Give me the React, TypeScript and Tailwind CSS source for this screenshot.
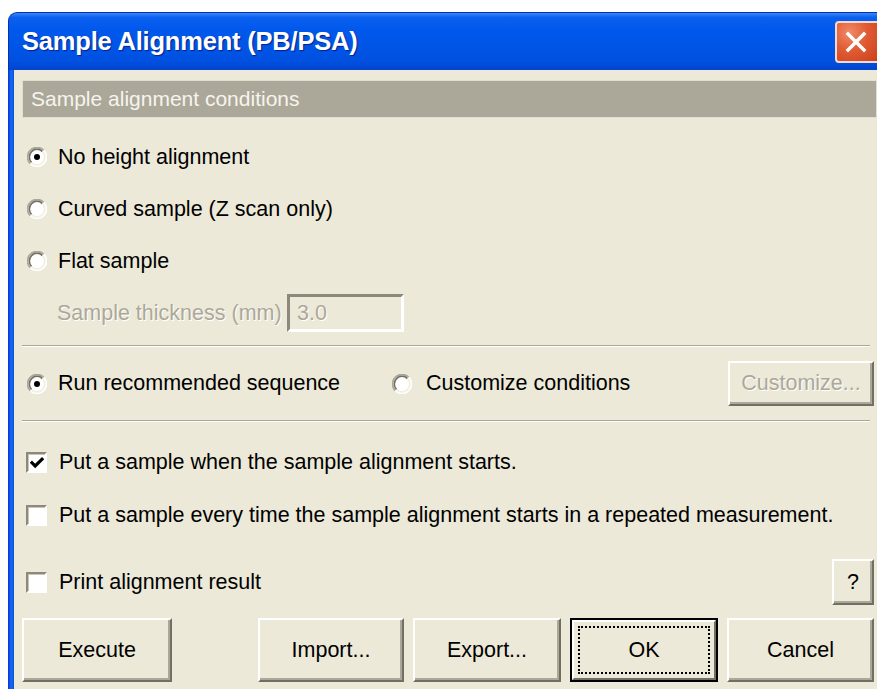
import React from 'react';

const Radio: React.FC<{ checked?: boolean }> = ({ checked }) => (
  <svg width="20" height="20" viewBox="0 0 20 20" className="shrink-0">
    <circle cx="10" cy="10" r="8.5" fill="#ffffff" />
    {/* sunken rim: dark upper-left, light lower-right */}
    <path d="M3.3 16.7 A9.4 9.4 0 0 1 16.7 3.3" stroke="#ACA899" strokeWidth="1.8" fill="none" />
    <path d="M4.6 15.4 A7.6 7.6 0 0 1 15.4 4.6" stroke="#716F64" strokeWidth="1.5" fill="none" />
    <path d="M16.7 3.3 A9.4 9.4 0 0 1 3.3 16.7" stroke="#ffffff" strokeWidth="1.6" fill="none" />
    <path d="M15.4 4.6 A7.6 7.6 0 0 1 4.6 15.4" stroke="#F1EFE2" strokeWidth="1.4" fill="none" />
    {checked && <circle cx="10" cy="10" r="3" fill="#000000" />}
  </svg>
);

const Checkbox: React.FC<{ checked?: boolean }> = ({ checked }) => (
  <div className="flex h-[21px] w-[21px] shrink-0 items-center justify-center border-2 border-t-[#8C897C] border-l-[#8C897C] border-r-white border-b-white bg-white shadow-[inset_1px_1px_0_#C9C6B8]">
    {checked && (
      <svg width="14" height="14" viewBox="0 0 14 14">
        <path d="M2 6.8 L5.2 10 L12 3.2" stroke="#000" strokeWidth="3.2" fill="none" strokeLinecap="square" />
      </svg>
    )}
  </div>
);

const Btn: React.FC<{ label: string; className?: string; disabled?: boolean }> = ({ label, className = '', disabled }) => (
  <button
    className={`flex items-center justify-center border-2 border-t-white border-l-white border-r-[#716F64] border-b-[#716F64] bg-[#ECE9D8] shadow-[inset_-2px_-2px_0_#ACA899] ${
      disabled ? 'text-[#ACA899] [text-shadow:1px_1px_0_#ffffff]' : 'text-black'
    } ${className}`}
  >
    {label}
  </button>
);

const Separator = () => <div className="mr-[4px] h-[2px] border-t border-t-[#ACA899] border-b border-b-white" />;

export default function App() {
  return (
    <div className="h-[689px] w-[877px] overflow-hidden bg-white pl-[8px] pt-[12px] font-['Liberation_Sans',Arial,sans-serif]">
      <div className="flex h-full flex-col">
        {/* title bar */}
        <div className="flex h-[58px] shrink-0 items-center rounded-tl-[9px] border-t border-l border-[#0831B0] bg-[linear-gradient(to_bottom,#3A86F8_0%,#0A5FEE_8%,#0058EC_30%,#0055E6_60%,#0150DF_85%,#0045CF_100%)] pl-[13px]">
          <span className="text-[25.5px] font-bold tracking-[-0.2px] text-white [text-shadow:1px_1px_1px_#0A1E8C]">
            Sample Alignment (PB/PSA)
          </span>
          <div className="ml-auto mr-[-4px] mt-[1px] flex h-[42px] w-[46px] items-center justify-center rounded-[4px] border-2 border-[#F3D9D0] bg-[radial-gradient(circle_at_30%_25%,#F08A68_0%,#E05A32_45%,#C8401C_100%)]">
            <svg width="24" height="24" viewBox="0 0 24 24" className="mr-[4px]">
              <path d="M4 4 L20 20 M20 4 L4 20" stroke="#ffffff" strokeWidth="3.4" strokeLinecap="square" />
            </svg>
          </div>
        </div>

        <div className="flex flex-1">
          <div className="w-[6px] shrink-0 bg-[linear-gradient(to_right,#0831D9_0%,#166AEE_50%,#0855DD_100%)]" />
          <div className="flex flex-1 flex-col bg-[#ECE9D8] pl-[8px] pr-[3px] text-[21.5px] text-black">
            <div className="mr-[-3px] mt-[10px] flex h-[38px] items-center border border-[#E2DFD2] bg-[#ACA899] pl-[8px] text-[21px] text-[#F6F4EE]">
              Sample alignment conditions
            </div>

            <div className="mt-[13px] flex h-[52px] items-center pl-[5px]">
              <Radio checked />
              <span className="ml-[11px]">No height alignment</span>
            </div>
            <div className="flex h-[52px] items-center pl-[5px]">
              <Radio />
              <span className="ml-[11px]">Curved sample (Z scan only)</span>
            </div>
            <div className="flex h-[52px] items-center pl-[5px]">
              <Radio />
              <span className="ml-[11px]">Flat sample</span>
            </div>
            <div className="flex h-[52px] items-center pl-[35px]">
              <span className="w-[230px] text-[#ACA899] [text-shadow:1px_1px_0_#ffffff]">Sample thickness (mm)</span>
              <div className="flex h-[38px] w-[117px] items-center border-[3px] border-t-[#8C897C] border-l-[#8C897C] border-r-white border-b-white pl-[7px] text-[#ACA899] [text-shadow:1px_1px_0_#ffffff]">
                3.0
              </div>
            </div>

            <div className="mt-[6px]">
              <Separator />
            </div>

            <div className="mt-[14px] flex h-[45px] items-center pl-[5px]">
              <div className="flex w-[365px] items-center">
                <Radio checked />
                <span className="ml-[11px]">Run recommended sequence</span>
              </div>
              <Radio />
              <span className="ml-[14px]">Customize conditions</span>
              <Btn label="Customize..." disabled className="ml-auto h-[45px] w-[146px]" />
            </div>

            <div className="mt-[14px]">
              <Separator />
            </div>

            <div className="mt-[14px] flex h-[53px] items-center pl-[4px]">
              <Checkbox checked />
              <span className="ml-[12px]">Put a sample when the sample alignment starts.</span>
            </div>
            <div className="flex h-[53px] items-center pl-[4px]">
              <Checkbox />
              <span className="ml-[12px]">Put a sample every time the sample alignment starts in a repeated measurement.</span>
            </div>

            <div className="mt-[17px] flex h-[46px] items-center pl-[4px]">
              <Checkbox />
              <span className="ml-[12px]">Print alignment result</span>
              <Btn label="?" className="ml-auto h-[46px] w-[42px]" />
            </div>

            <div className="mt-[13px] flex h-[64px]">
              <Btn label="Execute" className="h-full w-[150px]" />
              <div className="ml-auto flex gap-[9px]">
                <Btn label="Import..." className="h-full w-[146px]" />
                <Btn label="Export..." className="h-full w-[148px]" />
                <div className="flex h-full w-[148px] border-2 border-black">
                  <div className="flex flex-1 border-2 border-t-white border-l-white border-r-[#716F64] border-b-[#716F64] bg-[#ECE9D8] p-[4px]">
                    <div className="flex flex-1 items-center justify-center border-2 border-dotted border-black">OK</div>
                  </div>
                </div>
                <Btn label="Cancel" className="h-full w-[147px]" />
              </div>
            </div>
          </div>
        </div>
      </div>
    </div>
  );
}
